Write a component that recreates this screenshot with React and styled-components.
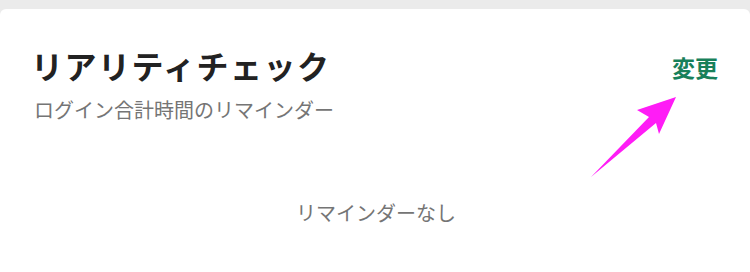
import React from "react";
import styled, { createGlobalStyle } from "styled-components";

const GlobalStyle = createGlobalStyle`
  html, body {
    margin: 0;
    padding: 0;
    background: #ebebeb;
    font-family: "Noto Sans CJK JP", "Noto Sans", sans-serif;
  }
`;

const Page = styled.div`
  width: 750px;
  height: 272px;
  padding-top: 9px;
  box-sizing: border-box;
  overflow: hidden;
`;

const Card = styled.section`
  position: relative;
  background: #ffffff;
  border-radius: 6px 6px 0 0;
  height: 100%;
  padding: 36px 32px 0 34px;
  box-sizing: border-box;
`;

const Header = styled.div`
  display: flex;
  justify-content: space-between;
  align-items: flex-start;
`;

const TitleBlock = styled.div`
  display: flex;
  flex-direction: column;
  gap: 12px;
`;

const Title = styled.h2`
  margin: 0 0 0 -3px;
  font-size: 32px;
  line-height: 40px;
  font-weight: 700;
  color: #222222;
  letter-spacing: 1.5px;
`;

const Subtitle = styled.p`
  margin: 0;
  font-size: 20px;
  line-height: 26px;
  color: #757575;
`;

const ChangeLink = styled.button`
  margin-top: 8px;
  padding: 0;
  border: none;
  background: none;
  font-family: inherit;
  font-size: 23px;
  line-height: 28px;
  font-weight: 700;
  color: #18805a;
  cursor: pointer;
`;

const Empty = styled.p`
  margin: 77px 0 0;
  text-align: center;
  font-size: 20px;
  line-height: 26px;
  color: #757575;
`;

const Pointer = styled.svg`
  position: absolute;
  left: 585px;
  top: 82px;
  width: 100px;
  height: 100px;
  pointer-events: none;
`;

const Arrow = () => (
  <Pointer viewBox="585 91 100 100">
    <polygon
      points="676,97 637,110 649,117 591,177 656,123 659,134"
      fill="#ff1cf6"
    />
  </Pointer>
);

export default function App() {
  return (
    <>
      <GlobalStyle />
      <Page>
        <Card>
          <Header>
            <TitleBlock>
              <Title>リアリティチェック</Title>
              <Subtitle>ログイン合計時間のリマインダー</Subtitle>
            </TitleBlock>
            <ChangeLink>変更</ChangeLink>
          </Header>
          <Empty>リマインダーなし</Empty>
          <Arrow />
        </Card>
      </Page>
    </>
  );
}
